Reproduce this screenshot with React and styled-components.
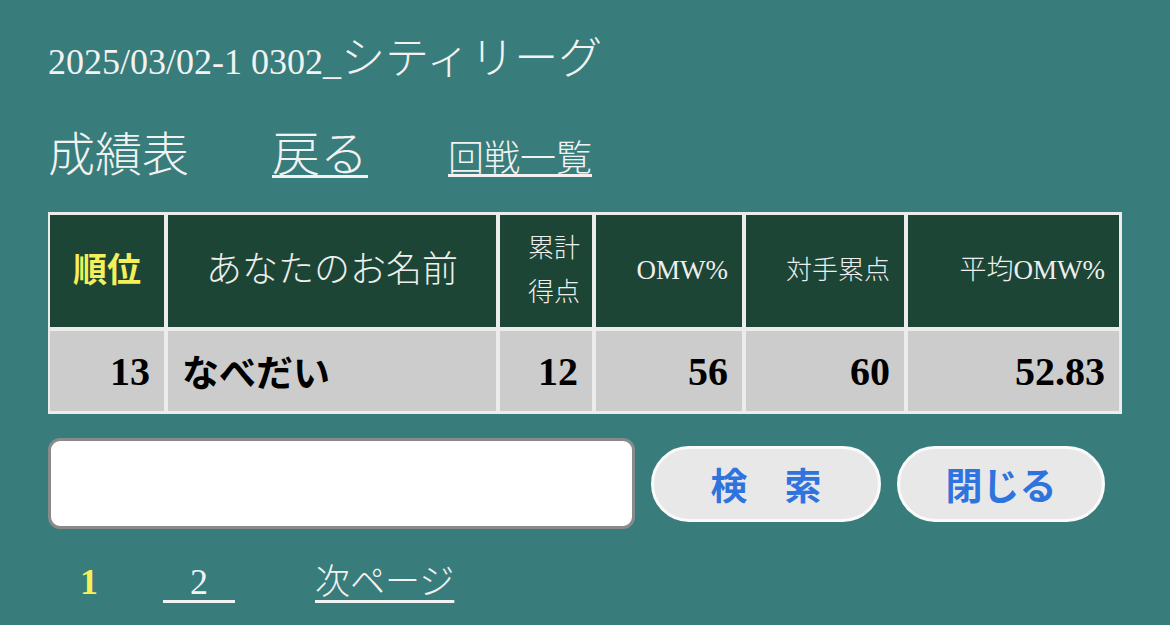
import React from 'react'
import styled, { createGlobalStyle } from 'styled-components'

const serif = `"Liberation Serif", "Noto Sans CJK JP", serif`
const sans = `"Noto Sans CJK JP", "Liberation Sans", sans-serif`

const GlobalStyle = createGlobalStyle`
	html, body {
		margin: 0;
		padding: 0;
		background: #387d7b;
	}
	body {
		font-family: ${serif};
		color: #f2f2f2;
	}
`

const Page = styled.div`
	width: 1170px;
	height: 625px;
	box-sizing: border-box;
	padding: 32px 0 0 48px;
	overflow: hidden;
`

const Title = styled.div`
	font-size: 36px;
	line-height: 56px;
	font-weight: 300;
	white-space: nowrap;
`

const Kana = styled.span`
	font-size: 44px;
`

const Nav = styled.div`
	display: flex;
	align-items: baseline;
	margin-top: 25px;
	height: 74px;
`

const Heading = styled.span`
	font-size: 47px;
	font-weight: 300;
	margin-right: 83px;
`

const NavLink = styled.a`
	color: #f2f2f2;
	font-size: ${p => p.size}px;
	font-weight: 300;
	text-decoration: underline;
	text-decoration-thickness: 3px;
	text-underline-offset: ${p => p.offset}px;
	margin-right: ${p => p.gap || 0}px;
`

const Table = styled.div`
	display: grid;
	grid-template-columns: 114px 328px 92px 146px 158px 211px;
	grid-template-rows: 112px 80px;
	gap: 4px;
	padding: 3px 3px 3px 2px;
	background: #ececec;
	width: max-content;
	margin-top: 23px;
`

const HeadCell = styled.div`
	background: #1c4535;
	color: ${p => (p.accent ? '#f5f05a' : '#eeeeee')};
	font-size: ${p => p.size || 27}px;
	font-weight: ${p => (p.accent ? 700 : 300)};
	display: flex;
	align-items: center;
	justify-content: ${p => p.align || 'center'};
	text-align: center;
	line-height: 1.7;
	padding: 0 ${p => p.pad || 14}px;
	box-sizing: border-box;
	white-space: nowrap;
`

const Cell = styled.div`
	background: #cccccc;
	color: #000;
	font-size: ${p => p.size || 40}px;
	font-weight: 700;
	display: flex;
	align-items: center;
	justify-content: ${p => p.align || 'flex-end'};
	padding: 0 14px;
	box-sizing: border-box;
	white-space: nowrap;
`

const SearchRow = styled.div`
	display: flex;
	align-items: center;
	gap: 16px;
	margin-top: 24px;
`

const Input = styled.input`
	width: 587px;
	height: 91px;
	box-sizing: border-box;
	border: 3px solid #8a8a8a;
	border-radius: 12px;
	background: #fff;
	outline: none;
	font-size: 28px;
`

const Button = styled.button`
	width: ${p => p.width}px;
	height: 76px;
	box-sizing: border-box;
	border: 3px solid #fafafa;
	border-radius: 38px;
	background: #e8e8e8;
	color: #2f73df;
	font-family: ${sans};
	font-size: 37px;
	font-weight: 700;
	cursor: pointer;
	padding: 0;
`

const Pager = styled.div`
	display: flex;
	align-items: baseline;
	margin-top: 24px;
	padding-left: 32px;
`

const Current = styled.span`
	color: #f5f05a;
	font-size: 36px;
	font-weight: 700;
	margin-right: 65px;
`

const PageLink = styled.a`
	color: #f2f2f2;
	font-size: ${p => p.size}px;
	font-weight: 300;
	text-decoration: underline;
	text-decoration-thickness: 3px;
	text-underline-offset: 6px;
	white-space: pre;
	margin-right: ${p => p.gap || 0}px;
`

export default function App() {
	return (
		<Page>
			<GlobalStyle />
			<Title>2025/03/02-1 0302_<Kana>シティリーグ</Kana></Title>
			<Nav>
				<Heading>成績表</Heading>
				<NavLink size={48} offset={4} gap={80}>戻る</NavLink>
				<NavLink size={36} offset={3}>回戦一覧</NavLink>
			</Nav>
			<Table>
				<HeadCell accent size={34}>順位</HeadCell>
				<HeadCell size={36}>あなたのお名前</HeadCell>
				<HeadCell size={26} align="flex-end" pad={12}>累計<br />得点</HeadCell>
				<HeadCell align="flex-end">OMW%</HeadCell>
				<HeadCell align="flex-end" size={26}>対手累点</HeadCell>
				<HeadCell align="flex-end">平均OMW%</HeadCell>
				<Cell>13</Cell>
				<Cell align="flex-start" size={37}>なべだい</Cell>
				<Cell>12</Cell>
				<Cell>56</Cell>
				<Cell>60</Cell>
				<Cell>52.83</Cell>
			</Table>
			<SearchRow>
				<Input type="text" />
				<Button width={230}>検　索</Button>
				<Button width={208}>閉じる</Button>
			</SearchRow>
			<Pager>
				<Current>1</Current>
				<PageLink size={36} gap={80}>{'   2   '}</PageLink>
				<PageLink size={35}>次ページ</PageLink>
			</Pager>
		</Page>
	)
}
